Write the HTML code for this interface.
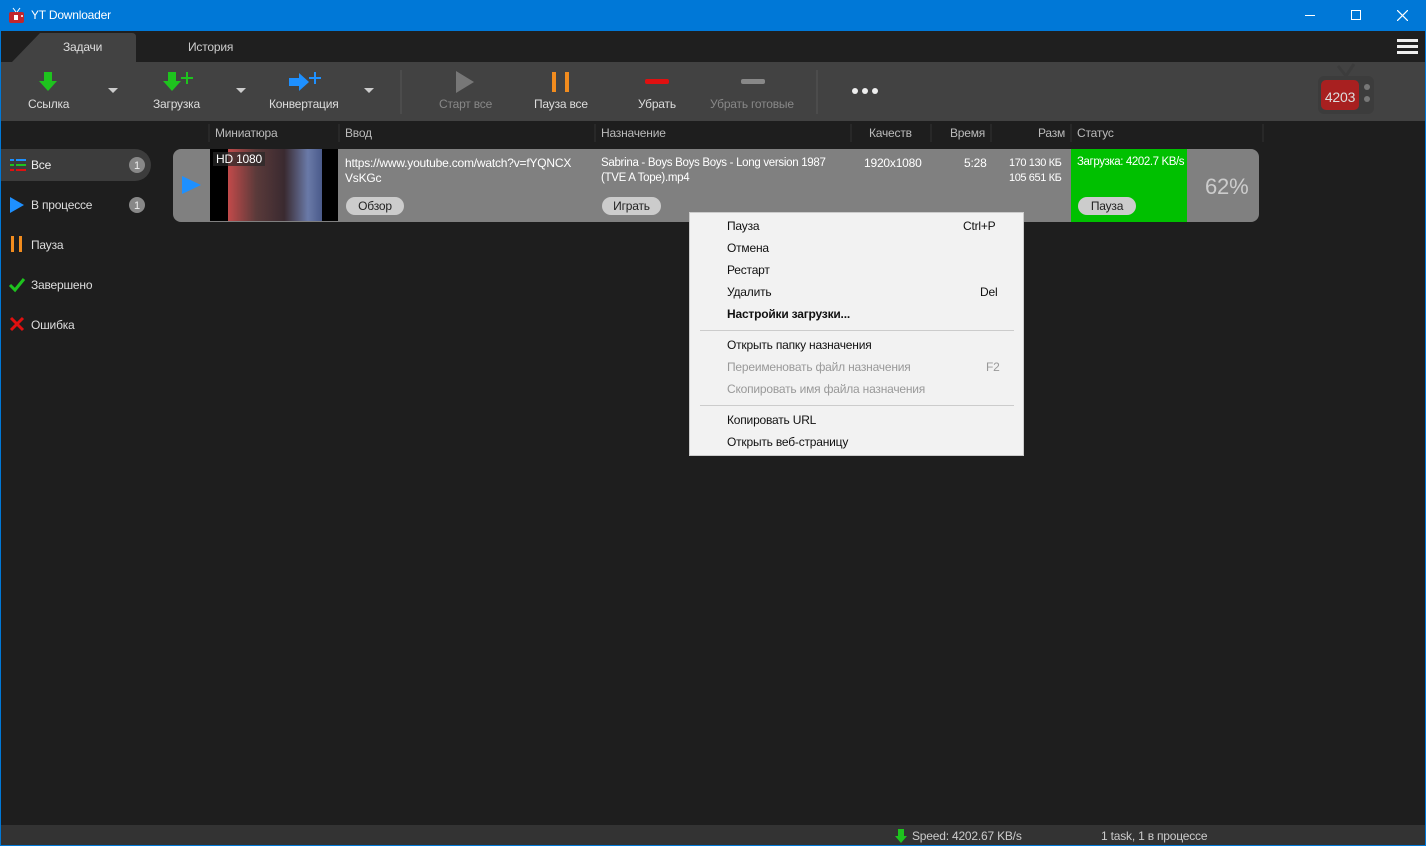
<!DOCTYPE html><html><head><meta charset="utf-8"><style>
*{margin:0;padding:0;box-sizing:border-box}
body{width:1426px;height:846px;background:#1e1e1e;font-family:"Liberation Sans",sans-serif;font-size:12px;color:#ddd;position:relative;overflow:hidden;letter-spacing:-0.2px}
.a{position:absolute}
.tb{left:-1px;top:0;width:1426px;height:31px;background:#0078d7;color:#fff;font-size:12px}
.tl{color:#bbb;font-size:12px}
.menu div{position:absolute;left:37px;font-size:12px;color:#111}
.menu .d{color:#999}
</style></head><body>
<div class="a" style="left:1px;top:0;width:1426px;height:846px">
<div class="a tb">
<svg class="a" style="left:8px;top:7px" width="17" height="17"><rect x="1" y="5" width="15" height="11" rx="2" fill="#c1272d"/><line x1="5" y1="1" x2="8" y2="5" stroke="#fff"/><line x1="12" y1="1" x2="9" y2="5" stroke="#fff"/><rect x="6" y="8" width="4" height="5" fill="#fff"/><circle cx="14" cy="9" r="1" fill="#fff"/></svg>
<div class="a" style="left:31px;top:8px">YT Downloader</div>
<div class="a" style="left:1305px;top:15px;width:10px;height:1px;background:#fff"></div>
<div class="a" style="left:1351px;top:10px;width:10px;height:10px;border:1px solid #fff"></div>
<svg class="a" style="left:1397px;top:10px" width="11" height="11"><path d="M0 0L11 11M11 0L0 11" stroke="#fff" stroke-width="1.2"/></svg>
</div>
<div class="a" style="left:-1px;top:31px;width:1426px;height:31px;background:#1f1f1f"></div>
<svg class="a" style="left:11px;top:33px" width="124" height="29"><path d="M0 29 L28 0 L120 0 Q124 0 124 4 L124 29Z" fill="#424242"/></svg>
<div class="a" style="left:62px;top:40px;color:#ddd">Задачи</div>
<div class="a" style="left:187px;top:40px;color:#ccc">История</div>
<div class="a" style="left:1396px;top:39px;width:21px;height:3px;background:#eee;box-shadow:0 6px 0 #eee,0 12px 0 #eee"></div>
<div class="a" style="left:-1px;top:62px;width:1426px;height:59px;background:#424242"></div>
<svg class="a" style="left:-1px;top:62px" width="1426" height="59">
<path d="M44 10h8v9h5l-9 10-9-10h5z" fill="#1ec31e"/>
<path d="M168 10h8v9h5l-9 10-9-10h5z" fill="#1ec31e"/><path d="M187 10v12M181 16h12" stroke="#1ec31e" stroke-width="2"/>
<path d="M289 16h10v-5l10 9-10 9v-5h-10z" fill="#1e90ff"/><path d="M315 10v12M309 16h12" stroke="#1e90ff" stroke-width="2"/>
<path d="M108 26h10l-5 5z M236 26h10l-5 5z M364 26h10l-5 5z" fill="#ccc"/>
<path d="M456 9l18 11-18 11z" fill="#777"/>
<rect x="552" y="10" width="4" height="20" fill="#f28c1e"/><rect x="565" y="10" width="4" height="20" fill="#f28c1e"/>
<rect x="645" y="17" width="24" height="5" rx="2" fill="#e01010"/>
<rect x="741" y="17" width="24" height="5" rx="2" fill="#888"/>
<circle cx="855" cy="29" r="3" fill="#eee"/><circle cx="865" cy="29" r="3" fill="#eee"/><circle cx="875" cy="29" r="3" fill="#eee"/>
<line x1="401" y1="8" x2="401" y2="52" stroke="#555"/><line x1="817" y1="8" x2="817" y2="52" stroke="#555"/>
<rect x="1318" y="14" width="56" height="38" rx="6" fill="#3c3c3c"/>
<path d="M1338 4l8 10 8-12" stroke="#3c3c3c" stroke-width="3" fill="none"/>
<rect x="1321" y="18" width="38" height="30" rx="5" fill="#a82020"/>
<circle cx="1367" cy="25" r="3" fill="#777"/><circle cx="1367" cy="37" r="3" fill="#777"/>
<text x="1340" y="40" fill="#ddd" font-size="14" text-anchor="middle" font-family="Liberation Sans">4203</text>
</svg>
<div class="a" style="left:27px;top:97px">Ссылка</div>
<div class="a" style="left:152px;top:97px">Загрузка</div>
<div class="a" style="left:268px;top:97px">Конвертация</div>
<div class="a" style="left:438px;top:97px;color:#888">Старт все</div>
<div class="a" style="left:533px;top:97px">Пауза все</div>
<div class="a" style="left:637px;top:97px">Убрать</div>
<div class="a" style="left:709px;top:97px;color:#888">Убрать готовые</div>
<div class="a tl" style="left:214px;top:126px">Миниатюра</div>
<div class="a tl" style="left:344px;top:126px">Ввод</div>
<div class="a tl" style="left:600px;top:126px">Назначение</div>
<div class="a tl" style="left:868px;top:126px">Качеств</div>
<div class="a tl" style="left:949px;top:126px">Время</div>
<div class="a tl" style="left:1037px;top:126px">Разм</div>
<div class="a tl" style="left:1076px;top:126px">Статус</div>
<svg class="a" style="left:-1px;top:124px" width="1300" height="20" stroke="#333"><path d="M209 0v18M339 0v18M595 0v18M851 0v18M931 0v18M991 0v18M1071 0v18M1263 0v18"/></svg>
<div class="a" style="left:-1px;top:149px;width:151px;height:32px;background:#3c3c3c;border-radius:0 16px 16px 0"></div>
<svg class="a" style="left:-1px;top:150px" width="160" height="190">
<path d="M10 10h4M16 10h10" stroke="#1e90ff" stroke-width="2"/><path d="M10 15h4M16 15h10" stroke="#1ec31e" stroke-width="2"/><path d="M10 20h4M16 20h10" stroke="#e01010" stroke-width="2"/>
<path d="M10 47l14 8-14 8z" fill="#1e90ff"/>
<rect x="11" y="86" width="3" height="16" fill="#f28c1e"/><rect x="19" y="86" width="3" height="16" fill="#f28c1e"/>
<path d="M10 135l5 5 9-11" stroke="#1ec31e" stroke-width="3" fill="none"/>
<path d="M11 168l12 12M23 168l-12 12" stroke="#e01010" stroke-width="3"/>
<circle cx="137" cy="15" r="8" fill="#888"/><circle cx="137" cy="55" r="8" fill="#888"/>
<text x="137" y="19" fill="#eee" font-size="11" text-anchor="middle" font-family="Liberation Sans">1</text><text x="137" y="59" fill="#eee" font-size="11" text-anchor="middle" font-family="Liberation Sans">1</text>
</svg>
<div class="a" style="left:30px;top:158px;color:#eee">Все</div>
<div class="a" style="left:30px;top:198px">В процессе</div>
<div class="a" style="left:30px;top:238px">Пауза</div>
<div class="a" style="left:30px;top:278px">Завершено</div>
<div class="a" style="left:30px;top:318px">Ошибка</div>
<div class="a" style="left:172px;top:149px;width:1086px;height:73px;background:#808080;border-radius:8px"></div>
<svg class="a" style="left:179px;top:175px" width="24" height="20"><path d="M2 1l19 9-19 9z" fill="#1e90ff"/></svg>
<div class="a" style="left:209px;top:149px;width:128px;height:72px;background:#000"></div>
<div class="a" style="left:227px;top:149px;width:94px;height:72px;background:linear-gradient(90deg,#c24a4a,#5a3a3a 30%,#3a2a30 60%,#6a7aa8 85%,#4a5a8a)"></div>
<div class="a" style="left:212px;top:152px;background:rgba(40,40,40,.7);color:#fff;padding:0 3px">HD 1080</div>
<div class="a" style="left:344px;top:156px;color:#fff;line-height:15px">https://www.youtube.com/watch?v=fYQNCX<br>VsKGc</div>
<div class="a" style="left:345px;top:197px;width:58px;height:18px;background:#ccc;border-radius:9px;color:#222;text-align:center;line-height:18px">Обзор</div>
<div class="a" style="left:600px;top:156px;color:#fff;line-height:15px;font-size:11.5px;letter-spacing:-0.3px">Sabrina - Boys Boys Boys  - Long version 1987<br>(TVE A Tope).mp4</div>
<div class="a" style="left:601px;top:197px;width:59px;height:18px;background:#ccc;border-radius:9px;color:#222;text-align:center;line-height:18px">Играть</div>
<div class="a" style="left:863px;top:156px;color:#fff">1920x1080</div>
<div class="a" style="left:963px;top:156px;color:#fff">5:28</div>
<div class="a" style="left:1008px;top:156px;color:#fff;line-height:15px;font-size:11px;letter-spacing:-0.4px">170 130 КБ<br>105 651 КБ</div>
<div class="a" style="left:1070px;top:149px;width:116px;height:73px;background:#00c000"></div>
<div class="a" style="left:1076px;top:156px;color:#fff;font-size:11.5px;letter-spacing:-0.4px">Загрузка: 4202.7 KB/s</div>
<div class="a" style="left:1077px;top:197px;width:58px;height:18px;background:#ccc;border-radius:9px;color:#222;text-align:center;line-height:18px">Пауза</div>
<div class="a" style="left:1204px;top:174px;font-size:22px;color:#ccc">62%</div>
<div class="a menu" style="left:688px;top:212px;width:335px;height:244px;background:#f2f2f2;border:1px solid #ccc">
<div style="top:6px">Пауза</div><div style="top:6px;left:273px">Ctrl+P</div>
<div style="top:28px">Отмена</div>
<div style="top:50px">Рестарт</div>
<div style="top:72px">Удалить</div><div style="top:72px;left:290px">Del</div>
<div style="top:94px;font-weight:bold">Настройки загрузки...</div>
<div style="top:117px;left:10px;width:314px;height:1px;background:#ccc"></div>
<div style="top:125px">Открыть папку назначения</div>
<div class="d" style="top:147px">Переименовать файл назначения</div><div class="d" style="top:147px;left:296px">F2</div>
<div class="d" style="top:169px">Скопировать имя файла назначения</div>
<div style="top:192px;left:10px;width:314px;height:1px;background:#ccc"></div>
<div style="top:200px">Копировать URL</div>
<div style="top:222px">Открыть веб-страницу</div>
</div>
<div class="a" style="left:-1px;top:825px;width:1426px;height:21px;background:#333"></div>
<svg class="a" style="left:894px;top:829px" width="12" height="14"><path d="M3 0h6v7h3l-6 7-6-7h3z" fill="#1ec31e"/></svg>
<div class="a" style="left:911px;top:829px;color:#ccc">Speed: 4202.67 KB/s</div>
<div class="a" style="left:1100px;top:829px;color:#ccc">1 task, 1 в процессе</div>
</div>
<div class="a" style="left:0;top:31px;width:1px;height:815px;background:#0078d7"></div>
<div class="a" style="left:1425px;top:31px;width:1px;height:815px;background:#0078d7"></div>
<div class="a" style="left:0;top:845px;width:1426px;height:1px;background:#0078d7"></div>
</body></html>
